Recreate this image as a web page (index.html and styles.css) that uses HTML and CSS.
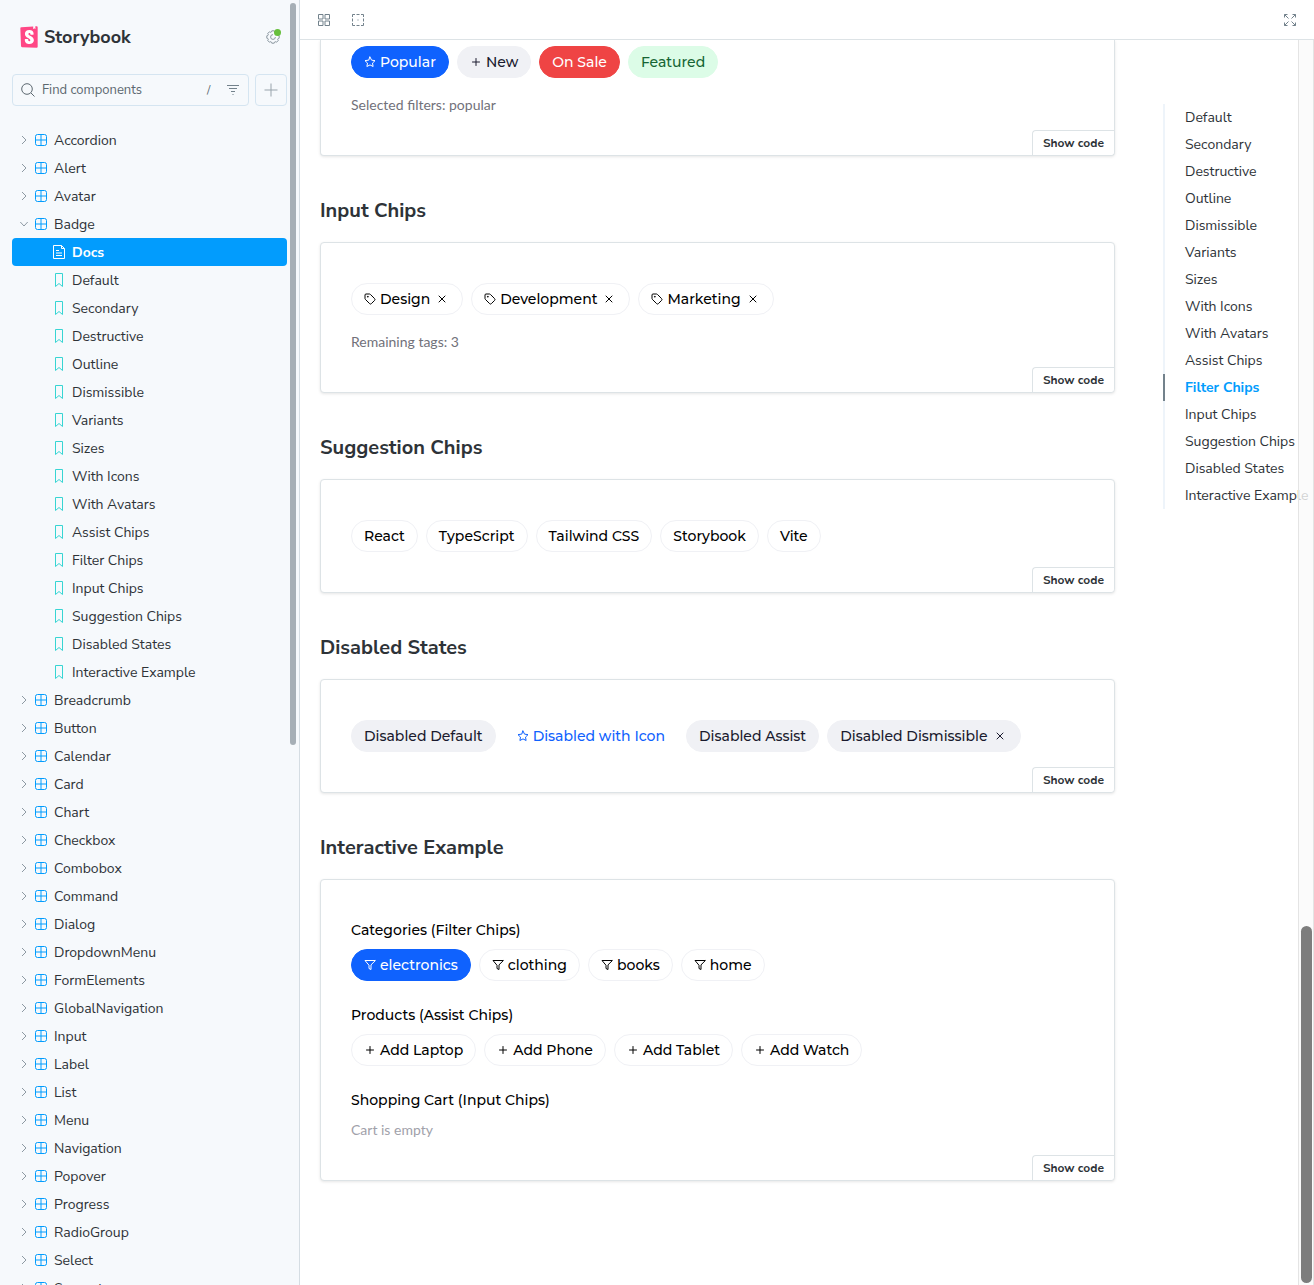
FILE: index.html
```html
<!DOCTYPE html>
<html lang="en">
<head>
<meta charset="utf-8">
<meta name="viewport" content="width=device-width, initial-scale=1">
<title>Badge - Docs - Storybook</title>
<link rel="stylesheet" href="styles.css">
</head>
<body>
<svg class="sprite" aria-hidden="true">
  <symbol id="i-right" viewBox="0 0 8 14"><path d="M2 3l4 4-4 4"/></symbol>
  <symbol id="i-down" viewBox="0 0 8 14"><path d="M0.300 5l3.700 4 3.700-4"/></symbol>
  <symbol id="i-component" viewBox="0 0 14 14"><rect x="1.500" y="1.500" width="11" height="11" rx="2"/><path d="M7 1.500v11M1.500 7h11"/></symbol>
  <symbol id="i-doc" viewBox="0 0 14 14"><path d="M1.500.5h8l3 3v10h-11zM9.500.5v3h3M4 5.500h3M4 8h6M4 10.500h6"/></symbol>
  <symbol id="i-story" viewBox="0 0 14 14"><path d="M3.500.5h7v13L7 10.500l-3.500 3z"/></symbol>
  <symbol id="i-search" viewBox="0 0 14 14"><circle cx="6" cy="6" r="5.300"/><path d="M10 10l3.500 3.500"/></symbol>
  <symbol id="i-filter" viewBox="0 0 14 14"><path d="M1 2.500h12M3 5.500h8M5 8.500h4M6.500 11.500h1"/></symbol>
  <symbol id="i-plus" viewBox="0 0 14 14"><path d="M7 .5v13M.5 7h13"/></symbol>
  <symbol id="i-grid" viewBox="0 0 14 14"><path d="M1.500 1.500H6V6H1.500zM8 1.500h4.500V6H8zM1.500 8H6v4.500H1.500zM8 8h4.500v4.500H8z"/></symbol>
  <symbol id="i-outline" viewBox="0 0 14 14"><path d="M1.500 4V1.500H4M5.500 1.500h3M10 1.500h2.500V4M12.500 5.500v3M12.500 10v2.500H10M8.500 12.500h-3M4 12.500H1.500V10M1.500 8.500v-3M6.500 7h1"/></symbol>
  <symbol id="i-expand" viewBox="0 0 14 14"><path d="M1.500 4.500v-3h3M1.500 1.500l4 4M9.500 1.500h3v3M12.500 1.500l-4 4M12.500 9.500v3h-3M12.500 12.500l-4-4M4.500 12.500h-3v-3M1.500 12.500l4-4"/></symbol>
  <symbol id="i-gear" viewBox="0 0 14 14"><g stroke-width=".8"><path id="tooth" d="M5 2.200Q5.700 2 5.800.8H8.200Q8.300 2 9 2.200"/><use href="#tooth" transform="rotate(45 7 7)"/><use href="#tooth" transform="rotate(90 7 7)"/><use href="#tooth" transform="rotate(135 7 7)"/><use href="#tooth" transform="rotate(180 7 7)"/><use href="#tooth" transform="rotate(225 7 7)"/><use href="#tooth" transform="rotate(270 7 7)"/><use href="#tooth" transform="rotate(315 7 7)"/><path d="M7 4.600a2.400 2.400 0 1 0 2.400 2.400"/></g></symbol>
  <symbol id="c-star" viewBox="0 0 24 24"><path d="M12 2l3.100 6.300 6.900 1-5 4.900 1.200 6.800-6.200-3.200L5.800 21 7 14.200 2 9.300l6.900-1z"/></symbol>
  <symbol id="c-plus" viewBox="0 0 24 24"><path d="M12 5v14M5 12h14"/></symbol>
  <symbol id="c-x" viewBox="0 0 24 24"><path d="M18 6L6 18M6 6l12 12"/></symbol>
  <symbol id="c-tag" viewBox="0 0 24 24"><path d="M12.600 2.600A2 2 0 0 0 11.200 2H4a2 2 0 0 0-2 2v7.200a2 2 0 0 0 .6 1.400l8.700 8.700a2.400 2.400 0 0 0 3.400 0l6.600-6.600a2.400 2.400 0 0 0 0-3.400z"/><circle cx="7.500" cy="7.500" r=".6"/></symbol>
  <symbol id="c-funnel" viewBox="0 0 24 24"><path d="M22 3H2l8 9.500V19l4 2v-8.500z"/></symbol>
</svg>

<div class="app">
  <aside class="sidebar">
    <div class="sidebar-scroll">
      <header class="brand">
        <a class="brand-link" href="#">
          <svg class="brand-mark" viewBox="2 0 20 24" aria-hidden="true"><path fill="#fff" d="M6 3h12v17H6z"/><path fill="#ff4785" d="M16.710.243l-.12 2.710a.18.18 0 00.29.15l1.060-.8.9.7a.18.18 0 00.28-.14l-.1-2.760 1.330-.1a1.200 1.200 0 011.279 1.200v21.596a1.200 1.200 0 01-1.260 1.200l-16.096-.72a1.200 1.200 0 01-1.150-1.160l-.75-19.797a1.200 1.200 0 011.130-1.270L16.700.222zM13.640 9.300c0 .47 3.160.24 3.590-.08 0-3.200-1.720-4.890-4.859-4.890-3.150 0-4.899 1.720-4.899 4.290 0 4.450 5.999 4.530 5.999 6.959 0 .7-.32 1.100-1.050 1.100-.96 0-1.350-.49-1.300-2.160 0-.36-3.649-.48-3.769 0-.27 4.030 2.230 5.200 5.099 5.200 2.790 0 4.969-1.490 4.969-4.180 0-4.770-6.099-4.640-6.099-6.999 0-.97.72-1.100 1.130-1.100.45 0 1.250.07 1.190 1.870z"/></svg>
          Storybook
        </a>
        <button class="icon-button settings" type="button" aria-label="Settings"><svg class="icon"><use href="#i-gear"/></svg><span class="dot"></span></button>
      </header>
      <div class="search-row">
        <label class="search">
          <svg class="icon" aria-hidden="true"><use href="#i-search"/></svg>
          <input type="text" placeholder="Find components" aria-label="Find components">
          <kbd>/</kbd>
          <button class="icon-button" type="button" aria-label="Filter"><svg class="icon"><use href="#i-filter"/></svg></button>
        </label>
        <button class="add" type="button" aria-label="Create a new story"><svg class="icon"><use href="#i-plus"/></svg></button>
      </div>
      <nav class="tree" id="tree" aria-label="Stories"></nav>
    </div>
    <div class="sidebar-thumb"></div>
  </aside>

  <main class="main">
    <div class="toolbar">
      <button class="icon-button" type="button" aria-label="Grid"><svg class="icon"><use href="#i-grid"/></svg></button>
      <button class="icon-button" type="button" aria-label="Outline"><svg class="icon"><use href="#i-outline"/></svg></button>
      <button class="icon-button push" type="button" aria-label="Full screen"><svg class="icon"><use href="#i-expand"/></svg></button>
    </div>

    <div class="canvas">
      <div class="docs">
        <div class="stories">
          <section class="card card-continued">
            <div class="preview">
              <div class="chips">
                <button type="button" class="chip primary"><svg class="glyph"><use href="#c-star"/></svg>Popular</button>
                <button type="button" class="chip secondary"><svg class="glyph"><use href="#c-plus"/></svg>New</button>
                <button type="button" class="chip danger">On Sale</button>
                <button type="button" class="chip success">Featured</button>
              </div>
              <p class="note">Selected filters: popular</p>
            </div>
            <button class="show-code" type="button">Show code</button>
          </section>

          <h3 id="input">Input Chips</h3>
          <section class="card">
            <div class="preview">
              <div class="chips">
                <span class="chip"><svg class="glyph"><use href="#c-tag"/></svg>Design<button class="close" type="button" aria-label="Remove Design"><svg class="glyph"><use href="#c-x"/></svg></button></span>
                <span class="chip"><svg class="glyph"><use href="#c-tag"/></svg>Development<button class="close" type="button" aria-label="Remove Development"><svg class="glyph"><use href="#c-x"/></svg></button></span>
                <span class="chip"><svg class="glyph"><use href="#c-tag"/></svg>Marketing<button class="close" type="button" aria-label="Remove Marketing"><svg class="glyph"><use href="#c-x"/></svg></button></span>
              </div>
              <p class="note">Remaining tags: 3</p>
            </div>
            <button class="show-code" type="button">Show code</button>
          </section>

          <h3 id="suggestion">Suggestion Chips</h3>
          <section class="card">
            <div class="preview">
              <div class="chips">
                <button type="button" class="chip">React</button>
                <button type="button" class="chip">TypeScript</button>
                <button type="button" class="chip">Tailwind CSS</button>
                <button type="button" class="chip">Storybook</button>
                <button type="button" class="chip">Vite</button>
              </div>
            </div>
            <button class="show-code" type="button">Show code</button>
          </section>

          <h3 id="disabled">Disabled States</h3>
          <section class="card">
            <div class="preview">
              <div class="chips">
                <span class="chip secondary">Disabled Default</span>
                <span class="chip ghost"><svg class="glyph"><use href="#c-star"/></svg>Disabled with Icon</span>
                <span class="chip secondary">Disabled Assist</span>
                <span class="chip secondary">Disabled Dismissible<button class="close" type="button" aria-label="Dismiss"><svg class="glyph"><use href="#c-x"/></svg></button></span>
              </div>
            </div>
            <button class="show-code" type="button">Show code</button>
          </section>

          <h3 id="interactive">Interactive Example</h3>
          <section class="card">
            <div class="preview">
              <div class="group">
                <h4>Categories (Filter Chips)</h4>
                <div class="chips">
                  <button type="button" class="chip primary"><svg class="glyph"><use href="#c-funnel"/></svg>electronics</button>
                  <button type="button" class="chip"><svg class="glyph"><use href="#c-funnel"/></svg>clothing</button>
                  <button type="button" class="chip"><svg class="glyph"><use href="#c-funnel"/></svg>books</button>
                  <button type="button" class="chip"><svg class="glyph"><use href="#c-funnel"/></svg>home</button>
                </div>
              </div>
              <div class="group">
                <h4>Products (Assist Chips)</h4>
                <div class="chips">
                  <button type="button" class="chip"><svg class="glyph"><use href="#c-plus"/></svg>Add Laptop</button>
                  <button type="button" class="chip"><svg class="glyph"><use href="#c-plus"/></svg>Add Phone</button>
                  <button type="button" class="chip"><svg class="glyph"><use href="#c-plus"/></svg>Add Tablet</button>
                  <button type="button" class="chip"><svg class="glyph"><use href="#c-plus"/></svg>Add Watch</button>
                </div>
              </div>
              <div class="group">
                <h4>Shopping Cart (Input Chips)</h4>
                <p class="empty">Cart is empty</p>
              </div>
            </div>
            <button class="show-code" type="button">Show code</button>
          </section>
        </div>

        <nav class="toc" aria-label="Table of contents">
          <ul>
            <li><a href="#">Default</a></li>
            <li><a href="#">Secondary</a></li>
            <li><a href="#">Destructive</a></li>
            <li><a href="#">Outline</a></li>
            <li><a href="#">Dismissible</a></li>
            <li><a href="#">Variants</a></li>
            <li><a href="#">Sizes</a></li>
            <li><a href="#">With Icons</a></li>
            <li><a href="#">With Avatars</a></li>
            <li><a href="#">Assist Chips</a></li>
            <li class="active"><a href="#">Filter Chips</a></li>
            <li><a href="#input">Input Chips</a></li>
            <li><a href="#suggestion">Suggestion Chips</a></li>
            <li><a href="#disabled">Disabled States</a></li>
            <li><a href="#interactive">Interactive Example</a></li>
          </ul>
        </nav>
      </div>
      <div class="canvas-track"><div class="canvas-thumb"></div></div>
    </div>
  </main>
</div>
<script src="tree.js"></script>
</body>
</html>
```
FILE: styles.css
```css
*, *::before, *::after { box-sizing: border-box; }

body {
  margin: 0;
  color: #2e3338;
  background: #fff;
  font: 14px/20px "Nunito Sans", Nunito, "Open Sans", sans-serif;
}

button { font: inherit; color: inherit; cursor: pointer; }
a { color: inherit; text-decoration: none; }
h3, h4, p, ul { margin: 0; padding: 0; }
ul { list-style: none; }

.sprite { position: absolute; width: 0; height: 0; }
.icon, .glyph { fill: none; stroke: currentColor; flex: none; display: block; }
.icon { width: 14px; height: 14px; }
.glyph { width: 12px; height: 12px; stroke-width: 2; stroke-linecap: round; stroke-linejoin: round; }

.app { display: flex; height: 100vh; }

/* Sidebar */
.sidebar {
  position: relative;
  flex: none;
  width: 300px;
  background: #f6f9fc;
  border-right: 1px solid #d5dde3;
}
.sidebar-scroll { height: 100%; padding: 26px 12px 0; overflow-y: auto; scrollbar-width: none; }
.sidebar-thumb {
  position: absolute;
  top: 3px;
  right: 3px;
  width: 6px;
  height: 742px;
  border-radius: 6px;
  background: #a6afb6;
}

.brand { display: flex; align-items: center; justify-content: space-between; height: 22px; padding-left: 8px; }
.brand-link { display: flex; align-items: center; gap: 6px; font-size: 18px; line-height: 21px; font-weight: 700; }
.brand-mark { width: 18px; height: 22px; }

.icon-button {
  display: flex;
  align-items: center;
  justify-content: center;
  width: 28px;
  height: 28px;
  padding: 0;
  border: 0;
  background: none;
  color: #73828c;
}
.settings { position: relative; }
.dot { position: absolute; top: 6px; right: 6px; width: 7px; height: 7px; border-radius: 50%; background: #66bf3c; }

.search-row { display: flex; gap: 6px; margin: 26px 0 20px; }
.search, .add { height: 32px; border: 1px solid #d5e5f1; border-radius: 4px; }
.search { display: flex; flex: 1; align-items: center; min-width: 0; padding: 0 1px 0 8px; color: #5c6870; }
.search input {
  flex: 1;
  min-width: 0;
  padding: 0 7px;
  border: 0;
  outline: 0;
  background: none;
  font: inherit;
  font-size: 13px;
}
.search input::placeholder { color: #5c6870; opacity: 1; }
.search kbd { width: 12px; font: inherit; font-size: 12px; line-height: 21px; }
.add { display: flex; align-items: center; justify-content: center; width: 32px; padding: 0; background: none; color: #98a3ab; }

.row { display: flex; align-items: center; gap: 6px; height: 28px; padding-left: 8px; border-radius: 4px; line-height: 21px; }
.row .arrow { width: 8px; color: #8d99a2; }
.row .component { color: #029cfd; }
.row.leaf { padding-left: 40px; }
.row.leaf .icon { color: #37d5d3; }
.row.selected { background: #029cfd; color: #fff; font-weight: 700; }
.row.selected .icon { color: #fff; }

/* Toolbar */
.main { display: flex; flex: 1; flex-direction: column; min-width: 0; }
.toolbar { display: flex; flex: none; align-items: center; gap: 6px; height: 40px; padding: 0 10px; border-bottom: 1px solid #dde3e6; }
.push { margin-left: auto; }

/* Docs page */
.canvas { position: relative; flex: 1; min-height: 0; }
.docs {
  display: grid;
  grid-template-columns: minmax(0, 1fr) 151px;
  gap: 48px;
  align-content: start;
  height: 100%;
  padding-left: 20px;
  overflow: auto;
  scrollbar-width: none;
}
.stories h3 { margin: 41px 0 17px; font-size: 20px; line-height: 28px; font-weight: 700; }

.card {
  display: flex;
  flex-direction: column;
  border: 1px solid #dde3e6;
  border-radius: 4px;
  background: #fff;
  box-shadow: 0 1px 3px rgba(0, 0, 0, 0.1);
}
.preview { padding: 40px 30px 15px; color: #000; }
.card-continued { border-top: 0; border-top-left-radius: 0; border-top-right-radius: 0; }
.card-continued .preview { padding-top: 6px; }
.show-code {
  align-self: flex-end;
  height: 25px;
  padding: 0 10px;
  border: 0 solid #dde3e6;
  border-width: 1px 0 0 1px;
  border-radius: 4px 0 4px 0;
  background: #fff;
  color: #2e3338;
  font-size: 12px;
  font-weight: 700;
  line-height: 16px;
}

.chips { display: flex; flex-wrap: wrap; gap: 8px; }
.chip {
  display: inline-flex;
  align-items: center;
  gap: 4px;
  height: 32px;
  padding: 0 12px;
  border: 1px solid #f0f1f5;
  border-radius: 16px;
  background: #fff;
  color: #000;
  font: 500 14px/20px Montserrat, Inter, sans-serif;
  white-space: nowrap;
}
.chip.primary { border-color: #0f62fe; background: #0f62fe; color: #fff; }
.chip.secondary { background: #f0f1f5; color: #1a1a2e; }
.chip.danger { border-color: #ef4444; background: #ef4444; color: #fff; }
.chip.success { border-color: #dcfce7; background: #dcfce7; color: #166534; }
.chip.ghost { border-color: transparent; background: none; color: #0f62fe; }
.close { display: flex; align-items: center; justify-content: center; width: 16px; height: 16px; padding: 0; border: 0; background: none; }

.note, .empty { font: 14px/21px Lato, sans-serif; }
.note { margin-top: 16px; color: #71717a; }
.empty { color: #a1a1aa; }
.group + .group { margin-top: 24px; }
.group h4 { margin-bottom: 8px; font: 500 14px/21px Montserrat, Inter, sans-serif; }

.toc { padding-top: 64px; white-space: nowrap; }
.toc li { height: 27px; padding-left: 20px; border-left: 2px solid #eef4fa; line-height: 27px; }
.toc .active { border-color: #73828c; color: #029cfd; font-weight: 700; }

.canvas-track {
  position: absolute;
  top: 0;
  right: 0;
  bottom: 0;
  width: 16px;
  border: 1px solid #e4e4e4;
  border-width: 0 1px;
  background: rgba(250, 250, 250, 0.8);
}
.canvas-thumb {
  position: absolute;
  right: 1px;
  bottom: 2px;
  width: 11px;
  height: 357px;
  border-radius: 6px;
  background: #7d7d7d;
}
```
FILE: tree.js
```js
const components = [
  'Accordion', 'Alert', 'Avatar', 'Badge', 'Breadcrumb', 'Button', 'Calendar', 'Card', 'Chart',
  'Checkbox', 'Combobox', 'Command', 'Dialog', 'DropdownMenu', 'FormElements', 'GlobalNavigation',
  'Input', 'Label', 'List', 'Menu', 'Navigation', 'Popover', 'Progress', 'RadioGroup', 'Select', 'Separator'
];
const badgeStories = [
  'Default', 'Secondary', 'Destructive', 'Outline', 'Dismissible', 'Variants', 'Sizes', 'With Icons',
  'With Avatars', 'Assist Chips', 'Filter Chips', 'Input Chips', 'Suggestion Chips', 'Disabled States',
  'Interactive Example'
];

const icon = (id, extra = '') => `<svg class="icon ${extra}" aria-hidden="true"><use href="#${id}"/></svg>`;
const leaf = (name, id, extra = '') => `<a class="row leaf ${extra}" href="#">${icon(id)}${name}</a>`;

document.getElementById('tree').innerHTML = components.map((name) => {
  const open = name === 'Badge';
  const row = `<a class="row" href="#" aria-expanded="${open}">${icon(open ? 'i-down' : 'i-right', 'arrow')}${icon('i-component', 'component')}${name}</a>`;
  return open
    ? row + leaf('Docs', 'i-doc', 'selected') + badgeStories.map((s) => leaf(s, 'i-story')).join('')
    : row;
}).join('');
```
